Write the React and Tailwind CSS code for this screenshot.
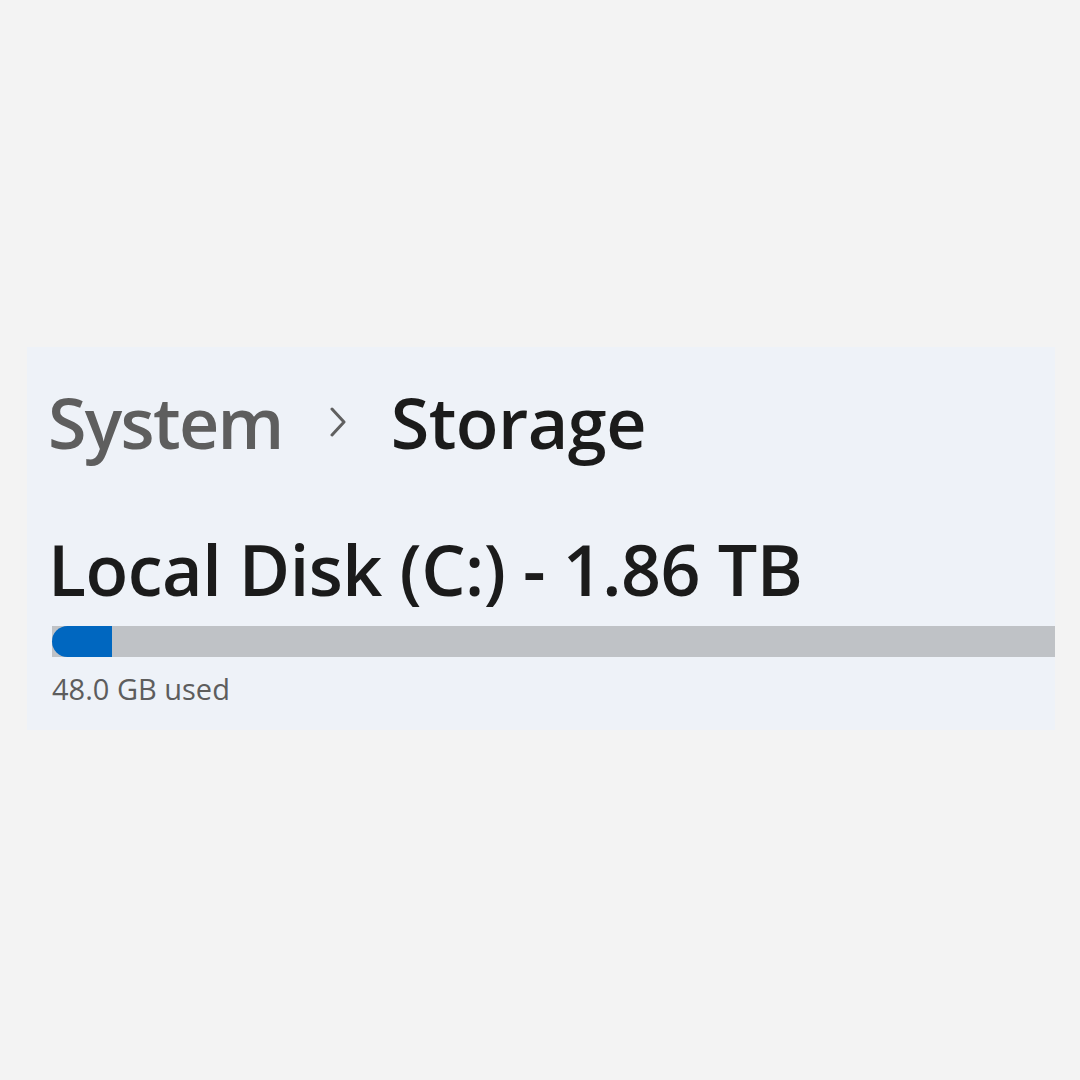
import React from 'react';

const StoragePanel = () => {
  const usedPercent = 6;

  return (
    <div className="w-full min-h-screen h-[1080px] bg-[#f3f3f3] flex flex-col justify-start pt-[347px] pl-[27px] pr-[25px]" style={{ fontFamily: '"Open Sans", "Noto Sans", sans-serif' }}>
      <div className="bg-[#eef2f8] h-[383px] pl-[21px] pt-[25px]">
        <div className="flex items-center h-[100px]">
          <span className="text-[70px] leading-none text-[#5e5e5e] font-semibold tracking-[-1.7px]">System</span>
          <svg className="ml-[44px] mr-[42px]" width="22" height="30" viewBox="0 0 22 30" fill="none">
            <path d="M5 2 L17 15 L5 28" stroke="#606060" strokeWidth="3" strokeLinecap="round" strokeLinejoin="round" />
          </svg>
          <span className="text-[70px] leading-none text-[#1b1b1b] font-semibold tracking-[-0.5px]">Storage</span>
        </div>
        <h1 className="mt-[62px] text-[70px] leading-none font-semibold text-[#1b1b1b] tracking-[-0.5px] whitespace-nowrap">
          Local Disk (C:) - 1.86 TB
        </h1>
        <div className="mt-[22px] ml-[4px] h-[31px] bg-[#bfc2c6] flex">
          <div className="h-full bg-[#0067c0] rounded-l-full" style={{ width: `${usedPercent}%` }} />
        </div>
        <p className="mt-[17px] ml-[4px] text-[29px] leading-none text-[#5d5d5d]">48.0 GB used</p>
      </div>
    </div>
  );
};

export default StoragePanel;
